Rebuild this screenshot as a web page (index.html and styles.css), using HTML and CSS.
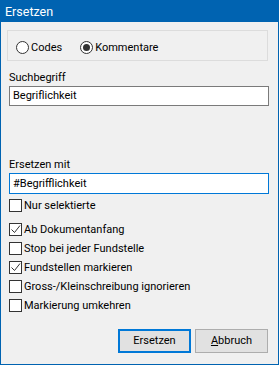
FILE: index.html
```html
<!DOCTYPE html>
<html lang="de">
<head>
    <meta charset="UTF-8">
    <title>Ersetzen</title>
    <link rel="stylesheet" href="styles.css">
</head>
<body>
    <div class="window">
        <div class="titlebar">Ersetzen</div>
        <div class="content">
            <div class="group">
                <label class="radio"><span class="circle"></span>Codes</label>
                <label class="radio"><span class="circle on"></span>Kommentare</label>
            </div>

            <div class="label first">Suchbegriff</div>
            <div class="input">Begriflichkeit</div>

            <div class="label second">Ersetzen mit</div>
            <div class="input focus">#Begrifflichkeit</div>

            <label class="check single"><span class="box"></span>Nur selektierte</label>

            <div class="options">
                <label class="check"><span class="box on"></span>Ab Dokumentanfang</label>
                <label class="check"><span class="box"></span>Stop bei jeder Fundstelle</label>
                <label class="check"><span class="box on"></span>Fundstellen markieren</label>
                <label class="check"><span class="box"></span>Gross-/Kleinschreibung ignorieren</label>
                <label class="check"><span class="box"></span>Markierung umkehren</label>
            </div>

            <div class="buttons">
                <div class="btn default">Ersetzen</div>
                <div class="btn"><u>A</u>bbruch</div>
            </div>
        </div>
    </div>
</body>
</html>
```

FILE: styles.css
```css
/* Windows-Dialog "Ersetzen" */
body {
    margin: 0;
    font-family: Roboto, "Liberation Sans", sans-serif;
    font-size: 11px;
    color: #000;
}
.window {
    width: 279px;
    height: 365px;
    box-sizing: border-box;
    border: 1px solid #0063b1;
    border-top: 0;
    background: #f0f0f0;
}
.titlebar {
    height: 22px;
    margin: 0 -1px;
    padding-left: 5px;
    background: #0063b1;
    color: #fff;
    font-size: 12.5px;
    line-height: 24px;
}
.content {
    padding: 0 9px 0 8px;
}

/* Gruppenbox mit Radios */
.group {
    height: 31px;
    box-sizing: border-box;
    margin: 8px 1px 0 -2px;
    border: 1px solid #dcdcdc;
    display: flex;
    align-items: center;
    padding: 4px 0 0 8px;
}
.radio {
    display: flex;
    align-items: center;
    margin-right: 18px;
}
.circle {
    width: 13px;
    height: 13px;
    box-sizing: border-box;
    border: 1px solid #333;
    border-radius: 50%;
    background: #fff;
    margin-right: 2px;
    display: flex;
    align-items: center;
    justify-content: center;
}
.circle.on::after {
    content: "";
    width: 7px;
    height: 7px;
    border-radius: 50%;
    background: #333;
}

/* Beschriftungen und Eingabefelder */
.label {
    line-height: 15px;
}
.label.first {
    margin-top: 9px;
}
.label.second {
    margin-top: 51px;
}
.input {
    height: 20px;
    box-sizing: border-box;
    margin-top: 1px;
    border: 1px solid #7a7a7a;
    background: #fff;
    padding-left: 3px;
    line-height: 18px;
}
.input.focus {
    border-color: #0078d7;
    height: 21px;
    line-height: 19px;
}

/* Checkboxen */
.check {
    display: flex;
    align-items: center;
    height: 13px;
    margin-top: 6px;
}
.check:first-child {
    margin-top: 0;
}
.check.single {
    margin-top: 5px;
}
.options {
    margin-top: 11px;
}
.box {
    width: 13px;
    height: 13px;
    box-sizing: border-box;
    border: 1px solid #333;
    background: #fff;
    margin-right: 2px;
    flex: none;
}
.box.on {
    background: #fff url("data:image/svg+xml,%3Csvg xmlns='http://www.w3.org/2000/svg' width='11' height='11'%3E%3Cpath d='M1.5 5.5l3 3l5.5-7' fill='none' stroke='%23333' stroke-width='1'/%3E%3C/svg%3E") no-repeat 0 0;
}

/* Schaltflaechen */
.buttons {
    display: flex;
    justify-content: flex-end;
    gap: 4px;
    margin-top: 17px;
    margin-right: 1px;
}
.btn {
    width: 73px;
    height: 24px;
    box-sizing: border-box;
    border: 1px solid #adadad;
    background: #e1e1e1;
    text-align: center;
    line-height: 22px;
}
.btn.default {
    border: 2px solid #0078d7;
    line-height: 20px;
}
```
